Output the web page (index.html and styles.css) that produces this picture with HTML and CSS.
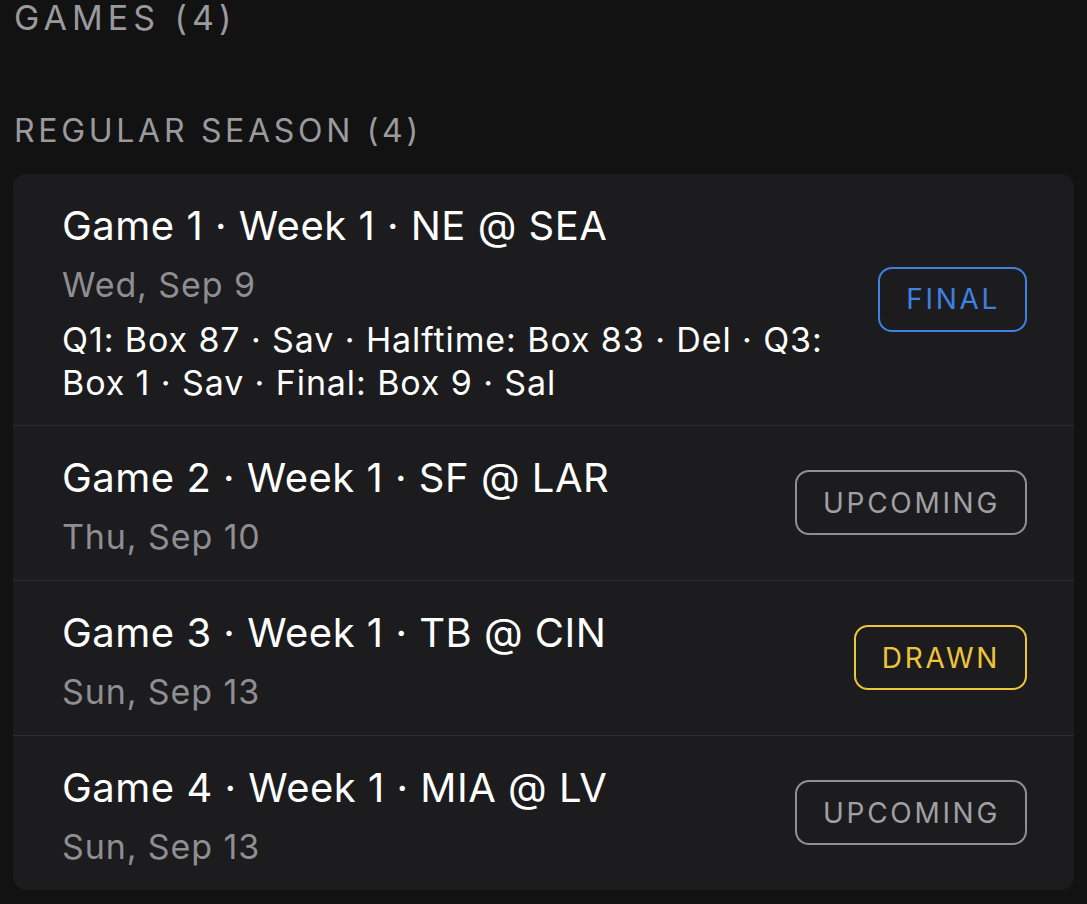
FILE: index.html
```html
<!DOCTYPE html>
<html lang="en">
<head>
  <meta charset="UTF-8" />
  <meta name="viewport" content="width=device-width, initial-scale=1.0"/>
  <title>Games</title>
  <link rel="stylesheet" href="styles.css">
</head>
<body>

  <h2 class="section-title">GAMES (4)</h2>

  <h3 class="group-title">REGULAR SEASON (4)</h3>

  <div class="card">
    <div class="game">
      <div class="game-info">
        <div class="game-title">Game 1 · Week 1 · NE @ SEA</div>
        <div class="game-date">Wed, Sep 9</div>
        <div class="game-detail">Q1: Box 87 · Sav · Halftime: Box 83 · Del · Q3: Box 1 · Sav · Final: Box 9 · Sal</div>
      </div>
      <span class="badge badge-final">FINAL</span>
    </div>

    <div class="game">
      <div class="game-info">
        <div class="game-title">Game 2 · Week 1 · SF @ LAR</div>
        <div class="game-date">Thu, Sep 10</div>
      </div>
      <span class="badge badge-upcoming">UPCOMING</span>
    </div>

    <div class="game">
      <div class="game-info">
        <div class="game-title">Game 3 · Week 1 · TB @ CIN</div>
        <div class="game-date">Sun, Sep 13</div>
      </div>
      <span class="badge badge-drawn">DRAWN</span>
    </div>

    <div class="game">
      <div class="game-info">
        <div class="game-title">Game 4 · Week 1 · MIA @ LV</div>
        <div class="game-date">Sun, Sep 13</div>
      </div>
      <span class="badge badge-upcoming">UPCOMING</span>
    </div>
  </div>

</body>
</html>
```

FILE: styles.css
```css
body {
  margin: 0;
  padding: 0 13px;
  background: #121212;
  color: #fff;
  font-family: Inter, "Noto Sans", sans-serif;
}
.section-title, .group-title {
  margin: 0;
  font-weight: 400;
  color: #9a9a9e;
  padding-left: 1px;
}
.section-title {
  font-size: 34px;
  line-height: 36px;
  letter-spacing: 5px;
}
.group-title {
  font-size: 32px;
  line-height: 36px;
  letter-spacing: 3.7px;
  margin-top: 77px;
  margin-bottom: 25px;
}
.card {
  background: #1c1c1e;
  border-radius: 14px;
  overflow: hidden;
}
.game {
  display: flex;
  align-items: center;
  gap: 28px;
  padding: 30px 47px 21px 49px;
  border-top: 1px solid #2c2c2e;
}
.game:first-child {
  border-top: none;
}
.game-info {
  flex: 1;
}
.game-title {
  font-size: 40px;
  line-height: 44px;
  letter-spacing: 0.5px;
}
.game-date {
  font-size: 34px;
  line-height: 44px;
  letter-spacing: 0.9px;
  margin-top: 15px;
  color: #8e8e93;
}
.game-detail {
  font-size: 34px;
  line-height: 43px;
  letter-spacing: 0.9px;
  margin-top: 11px;
}
/* badge sits centred on the whole row, not on the padded content */
.badge {
  flex: none;
  height: 65px;
  margin-top: -10px;
  box-sizing: border-box;
  padding: 0 25px 0 26px;
  display: flex;
  align-items: center;
  border: 2px solid;
  border-radius: 14px;
  font-size: 28px;
  letter-spacing: 2.7px;
}
.badge-final {
  color: #3f80e0;
  border-color: #3f80e0;
}
.badge-upcoming {
  color: #a0a0a4;
  border-color: #909094;
}
.badge-drawn {
  color: #eec43a;
  border-color: #eec43a;
}
```
